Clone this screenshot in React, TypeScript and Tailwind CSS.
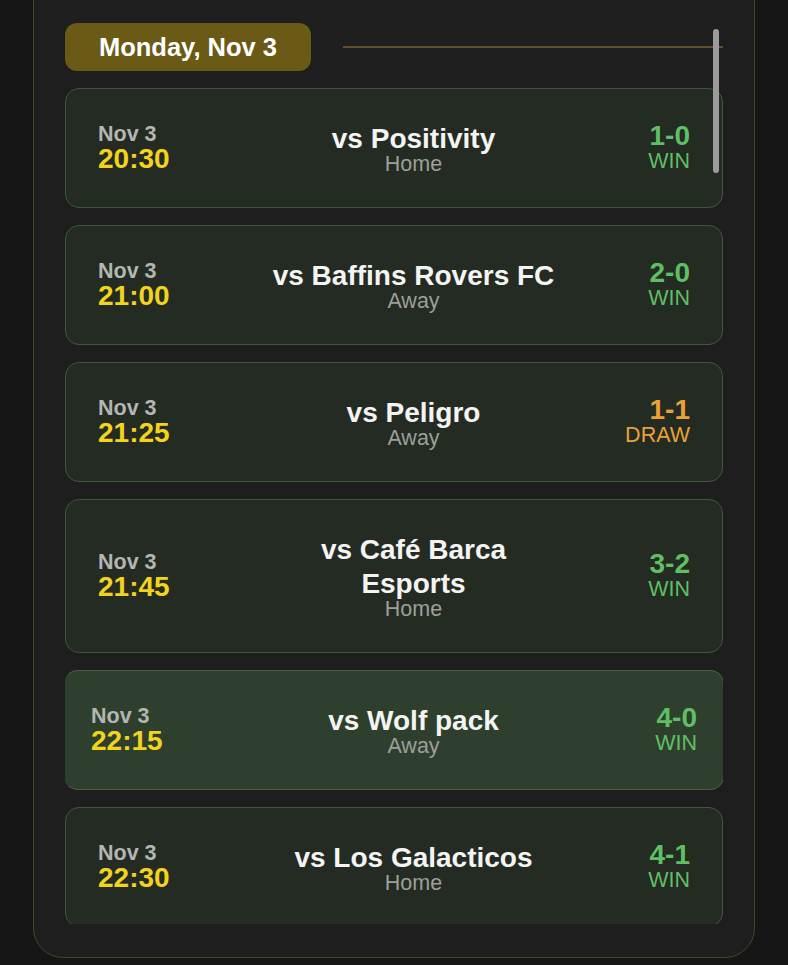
import React from 'react';

type Match = {
  date: string;
  time: string;
  opponent: string;
  venue: 'Home' | 'Away';
  score: string;
  result: 'WIN' | 'DRAW' | 'LOSS';
  hovered?: boolean;
};

const matches: Match[] = [
  { date: 'Nov 3', time: '20:30', opponent: 'vs Positivity', venue: 'Home', score: '1-0', result: 'WIN' },
  { date: 'Nov 3', time: '21:00', opponent: 'vs Baffins Rovers FC', venue: 'Away', score: '2-0', result: 'WIN' },
  { date: 'Nov 3', time: '21:25', opponent: 'vs Peligro', venue: 'Away', score: '1-1', result: 'DRAW' },
  { date: 'Nov 3', time: '21:45', opponent: 'vs Café Barca Esports', venue: 'Home', score: '3-2', result: 'WIN' },
  { date: 'Nov 3', time: '22:15', opponent: 'vs Wolf pack', venue: 'Away', score: '4-0', result: 'WIN', hovered: true },
  { date: 'Nov 3', time: '22:30', opponent: 'vs Los Galacticos', venue: 'Home', score: '4-1', result: 'WIN' },
];

const MatchCard: React.FC<{ match: Match }> = ({ match }) => {
  const resultColor = match.result === 'DRAW' ? 'text-[#e8a236]' : 'text-[#5fbf64]';
  const cardStyle = match.hovered
    ? 'bg-[#2f3f2e] border-[#46613f] border-l-[#2f3f2e] -mx-px px-[26px]'
    : 'bg-[#242b23] border-[#3e583b] px-8';

  return (
    <div className={`flex shrink-0 items-center rounded-[14px] border pt-[33px] pb-[35px] ${cardStyle}`}>
      <div className="flex w-[170px] shrink-0 translate-y-[1px] flex-col">
        <span className="text-[21.5px] leading-[22px] font-bold text-[#b3b6b1]">{match.date}</span>
        <span className="text-[28px] leading-[28px] font-bold text-[#f3d41c]">{match.time}</span>
      </div>
      <div className="flex min-w-0 flex-1 flex-col items-center text-center">
        <span className="text-[28px] leading-[34px] font-bold text-[#f4f4f2]">{match.opponent}</span>
        <span className="text-[21.5px] leading-[16px] text-[#9c9f9a]">{match.venue}</span>
      </div>
      <div className={`flex w-[131px] shrink-0 flex-col items-end ${resultColor}`}>
        <span className="text-[28px] leading-[28px] font-bold">{match.score}</span>
        <span className="text-[21.5px] leading-[22px]">{match.result}</span>
      </div>
    </div>
  );
};

export default function App() {
  return (
    <div className="h-[965px] w-[788px] overflow-hidden bg-[#161616] font-['Liberation_Sans',Arial,sans-serif]">
      <div className="mx-[33px] -mt-[30px] flex h-[988px] flex-col rounded-[30px] border border-[#4a4229] bg-[#1e1e1e] px-[31px] pt-[52px] pb-[33px]">
        <div className="relative flex min-h-0 flex-1 flex-col gap-[17px] overflow-hidden">
          <div className="flex shrink-0 items-center gap-8">
            <div className="flex h-12 w-[246px] items-center justify-center rounded-[12px] bg-[#6a5a16]">
              <span className="text-[25.5px] font-bold text-white">Monday, Nov 3</span>
            </div>
            <div className="h-[1.5px] flex-1 bg-[#5f4f2c]" />
          </div>

          {matches.map((m) => (
            <MatchCard key={m.time} match={m} />
          ))}

          <div className="absolute top-[6px] right-[4px] h-[144px] w-[6px] rounded-full bg-[#9c9c9c]" />
        </div>
      </div>
    </div>
  );
}
